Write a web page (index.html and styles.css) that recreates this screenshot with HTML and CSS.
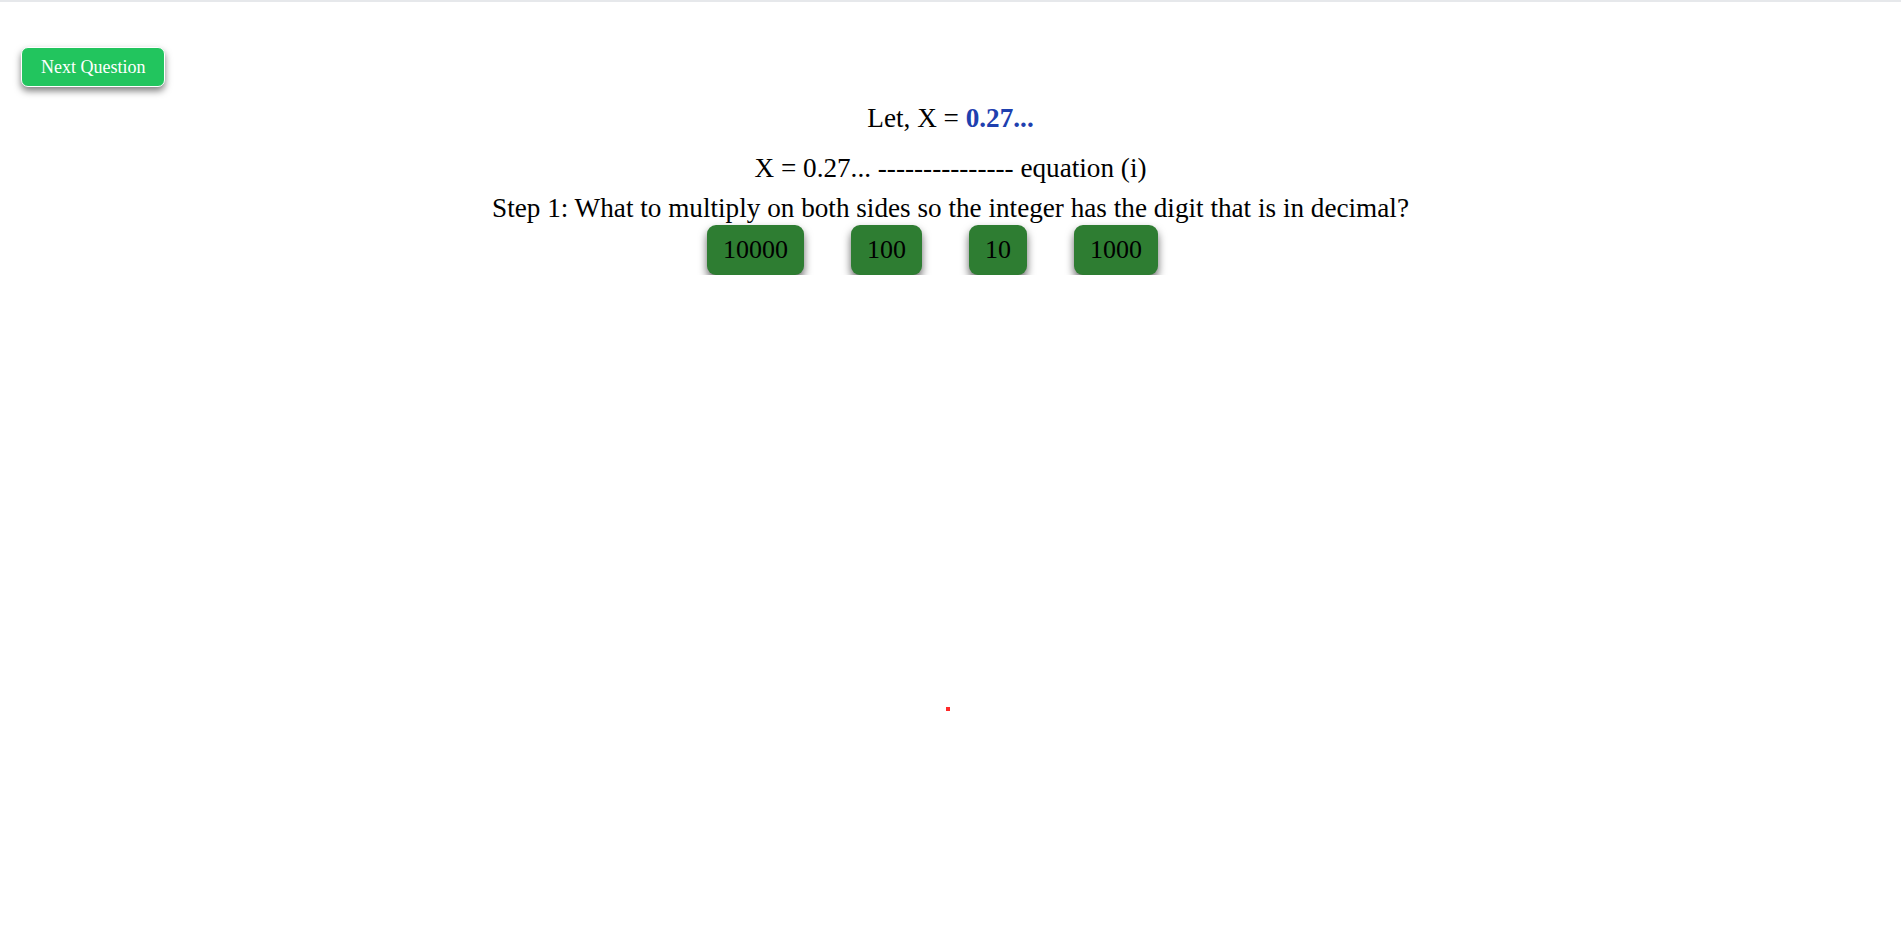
FILE: index.html
```html
<!DOCTYPE html>
<html>
<head>
<meta charset="utf-8">
<link rel="stylesheet" href="styles.css">
</head>
<body>
<div class="topline"></div>
<div class="page">
  <div class="toolbar">
    <button class="next-btn">Next Question</button>
  </div>
  <div class="question">
    <p class="let">Let, X = <b class="value">0.27...</b></p>
    <p class="equation">X = 0.27... --------------- equation (i)</p>
    <p class="step">Step 1: What to multiply on both sides so the integer has the digit that is in decimal?</p>
    <div class="options">
      <button class="opt">10000</button>
      <button class="opt">100</button>
      <button class="opt">10</button>
      <button class="opt">1000</button>
    </div>
  </div>
</div>
<div class="dot"></div>
</body>
</html>
```

FILE: styles.css
```css
html, body {
  margin: 0;
  padding: 0;
  background: #ffffff;
  font-family: "Liberation Serif", "Times New Roman", serif;
  color: #000000;
}
.topline {
  height: 2px;
  background: #e6e8eb;
}
.page {
  padding: 0 0 0 21px;
}
.toolbar {
  padding-top: 45px;
  height: 40px;
}
.next-btn {
  height: 40px;
  padding: 0 19px;
  border: 1px solid #ffffff;
  border-radius: 7px;
  background: #22c55e;
  color: #ffffff;
  font-family: "Liberation Serif", "Times New Roman", serif;
  font-size: 18px;
  box-shadow: 0 4px 7px rgba(0, 0, 0, 0.5);
  cursor: pointer;
}
.question {
  margin-left: -21px;
  text-align: center;
  font-size: 27.2px;
}
.question p {
  margin: 0;
  line-height: 31px;
}
.let {
  margin-top: 16px !important;
}
.value {
  color: #1e40af;
}
.equation {
  margin-top: 19px !important;
}
.step {
  margin-top: 9px !important;
}
.options {
  display: flex;
  justify-content: center;
  gap: 47px;
  padding-right: 36px;
  margin-top: 1px;
}
.opt {
  height: 50px;
  padding: 0 16px;
  border: none;
  border-radius: 9px;
  background: #2e7d32;
  color: #000000;
  font-family: "Liberation Serif", "Times New Roman", serif;
  font-size: 26px;
  box-shadow: 0 5px 8px rgba(0, 0, 0, 0.6);
  cursor: pointer;
}
.dot {
  position: absolute;
  left: 946px;
  top: 707px;
  width: 4px;
  height: 4px;
  background: #ff2a2a;
}
```
